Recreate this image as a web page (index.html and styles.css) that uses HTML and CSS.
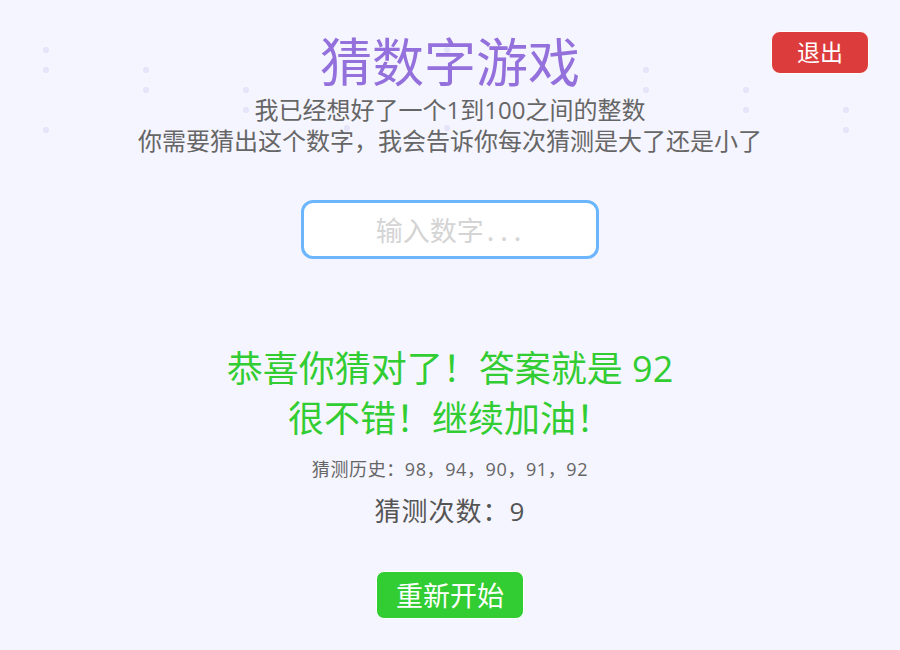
FILE: index.html
```html
<!DOCTYPE html>
<html lang="zh-CN">
<head>
<meta charset="utf-8">
<title>猜数字游戏</title>
<link rel="stylesheet" href="styles.css">
</head>
<body>
<div class="game">
  <div class="sparkles" aria-hidden="true">
    <span class="dot" style="left:43px;top:47px"></span>
    <span class="dot" style="left:43px;top:67px"></span>
    <span class="dot" style="left:43px;top:127px"></span>
    <span class="dot" style="left:143px;top:67px"></span>
    <span class="dot" style="left:143px;top:87px"></span>
    <span class="dot" style="left:243px;top:87px"></span>
    <span class="dot" style="left:243px;top:107px"></span>
    <span class="dot" style="left:344px;top:125px"></span>
    <span class="dot" style="left:444px;top:47px"></span>
    <span class="dot" style="left:444px;top:125px"></span>
    <span class="dot" style="left:643px;top:67px"></span>
    <span class="dot" style="left:643px;top:87px"></span>
    <span class="dot" style="left:743px;top:87px"></span>
    <span class="dot" style="left:743px;top:107px"></span>
    <span class="dot" style="left:843px;top:107px"></span>
    <span class="dot" style="left:843px;top:127px"></span>
  </div>

  <button class="btn-exit" type="button">退出</button>

  <h1 class="title">猜数字游戏</h1>
  <p class="intro">
    <span class="intro-line">我已经想好了一个1到100之间的整数</span>
    <span class="intro-line">你需要猜出这个数字，我会告诉你每次猜测是大了还是小了</span>
  </p>

  <input class="guess-input" type="text" placeholder="输入数字...">

  <div class="result">
    <p class="message">
      <span class="message-line">恭喜你猜对了！答案就是 92</span>
      <span class="message-line">很不错！继续加油！</span>
    </p>
    <p class="history">猜测历史：98，94，90，91，92</p>
    <p class="count">猜测次数：9</p>
  </div>

  <button class="btn-restart" type="button">重新开始</button>
</div>
</body>
</html>
```

FILE: styles.css
```css
* {
  box-sizing: border-box;
}

html, body {
  margin: 0;
  padding: 0;
  height: 100%;
}

body {
  background: #f5f5ff;
  font-family: "Open Sans", "Noto Sans CJK SC", sans-serif;
  color: #666;
  text-spacing-trim: space-all;
}

.game {
  position: relative;
  min-height: 100%;
  display: flex;
  flex-direction: column;
  align-items: center;
  padding-top: 33px;
}

.sparkles {
  position: absolute;
  inset: 0;
  pointer-events: none;
}

.dot {
  position: absolute;
  width: 6px;
  height: 6px;
  border-radius: 50%;
  background: #e4e4fa;
}

.btn-exit {
  position: absolute;
  top: 31px;
  right: 31px;
  width: 98px;
  height: 43px;
  border: 1px solid #fff;
  border-radius: 9px;
  background: #dc3c3c;
  color: #fff;
  font-family: inherit;
  font-size: 23px;
  line-height: 1;
  padding: 0;
}

.title {
  position: relative;
  margin: 0;
  font-size: 52px;
  font-weight: 400;
  line-height: 58px;
  color: #9370db;
}

.intro {
  position: relative;
  margin: 3px 0 0;
  display: flex;
  flex-direction: column;
  align-items: center;
  font-size: 24px;
  color: #666;
}

.intro-line {
  display: block;
  height: 31px;
  line-height: 31px;
  white-space: nowrap;
}

.guess-input {
  margin-top: 44px;
  width: 298px;
  height: 59px;
  border: 3px solid #6cb6ff;
  border-radius: 12px;
  background: #fff;
  font-family: "Noto Sans Mono CJK SC", "Liberation Mono", "Noto Sans CJK SC", monospace;
  font-size: 27px;
  text-align: center;
  color: #333;
  outline: none;
}

.guess-input::placeholder {
  color: #d4d4d4;
}

.result {
  margin-top: 85px;
  display: flex;
  flex-direction: column;
  align-items: center;
}

.message {
  margin: 0;
  display: flex;
  flex-direction: column;
  align-items: center;
  font-size: 36px;
  color: #32cd32;
}

.message-line {
  display: block;
  height: 50px;
  line-height: 50px;
  white-space: nowrap;
}

.history {
  margin: 13px 0 0;
  font-size: 18px;
  line-height: 24px;
  letter-spacing: 0.6px;
  color: #666;
}

.count {
  margin: 15px 0 0;
  font-size: 26px;
  line-height: 30px;
  letter-spacing: 1px;
  color: #555;
}

.btn-restart {
  margin-top: 45px;
  width: 148px;
  height: 48px;
  border: 1px solid #fff;
  border-radius: 8px;
  background: #32cd32;
  color: #fff;
  font-family: inherit;
  font-size: 27px;
  line-height: 1;
  padding: 0;
}
```
